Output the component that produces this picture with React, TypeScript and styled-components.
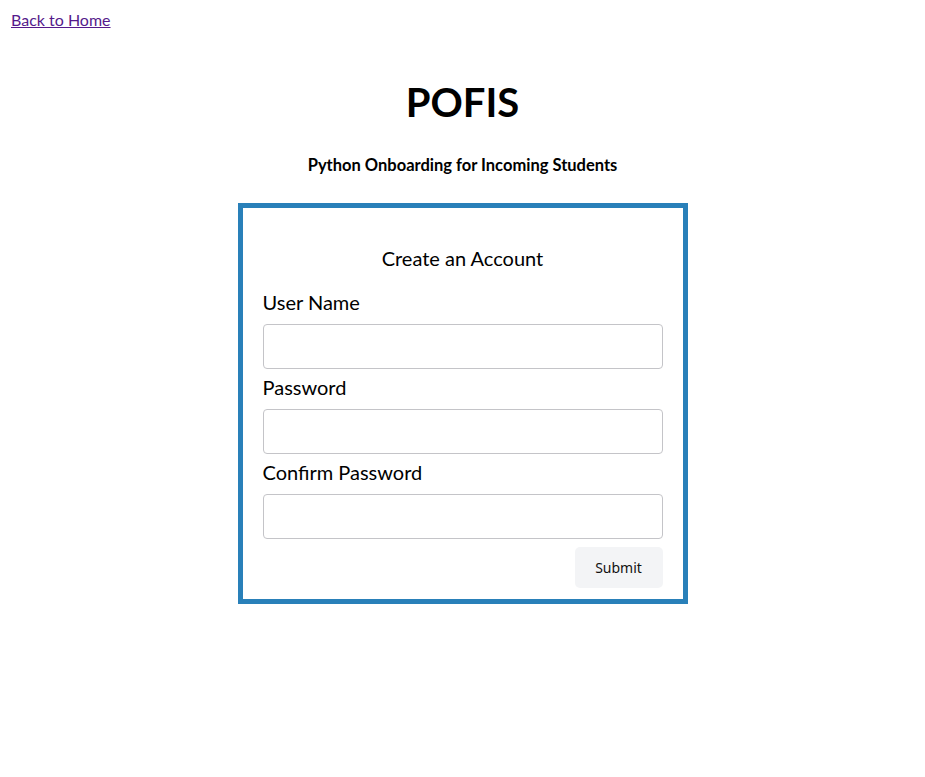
import React from "react";
import styled, { createGlobalStyle } from "styled-components";

const Global = createGlobalStyle`
  html, body { margin: 0; padding: 0; background: #fff; }
  body { font-family: Lato, "Liberation Sans", sans-serif; color: #000; }
`;

const Page = styled.div`
  padding: 10px 11px 0 11px;
`;

const HomeLink = styled.a`
  font-size: 16px;
  color: #551a8b;
  text-decoration: underline;
  line-height: 19px;
`;

const Main = styled.main`
  display: flex;
  flex-direction: column;
  align-items: center;
`;

const Title = styled.h1`
  margin: 49px 0 0;
  font-size: 40px;
  font-weight: 700;
  line-height: 48px;
`;

const Subtitle = styled.h2`
  margin: 29px 0 0;
  font-size: 16.5px;
  font-weight: 700;
  line-height: 20px;
`;

const Card = styled.form`
  margin-top: 28px;
  width: 450px;
  box-sizing: border-box;
  border: 5px solid #2980b9;
  padding: 38px 20px 11px;
  display: flex;
  flex-direction: column;
`;

const CardTitle = styled.div`
  text-align: center;
  font-size: 20px;
  line-height: 24px;
  margin-bottom: 20px;
`;

const Label = styled.label`
  font-size: 20px;
  line-height: 24px;
  margin-bottom: 10px;
`;

const Input = styled.input`
  box-sizing: border-box;
  width: 100%;
  height: 45px;
  border: 1px solid #c4c4c8;
  border-radius: 4px;
  margin-bottom: 6px;
  font-size: 16px;
  padding: 0 10px;
`;

const Actions = styled.div`
  display: flex;
  justify-content: flex-end;
  margin-top: 2px;
`;

const SubmitButton = styled.button`
  width: 88px;
  height: 41px;
  border: none;
  border-radius: 5px;
  background: #f3f4f6;
  font-family: "Noto Sans", "DejaVu Sans", sans-serif;
  font-size: 14px;
  font-weight: 400;
  color: #111;
`;

export default function App() {
  return (
    <>
      <Global />
      <Page>
        <HomeLink href="#">Back to Home</HomeLink>
        <Main>
          <Title>POFIS</Title>
          <Subtitle>Python Onboarding for Incoming Students</Subtitle>
          <Card onSubmit={(e) => e.preventDefault()}>
            <CardTitle>Create an Account</CardTitle>
            <Label>User Name</Label>
            <Input type="text" />
            <Label>Password</Label>
            <Input type="password" />
            <Label>Confirm Password</Label>
            <Input type="password" />
            <Actions>
              <SubmitButton type="submit">Submit</SubmitButton>
            </Actions>
          </Card>
        </Main>
      </Page>
    </>
  );
}
